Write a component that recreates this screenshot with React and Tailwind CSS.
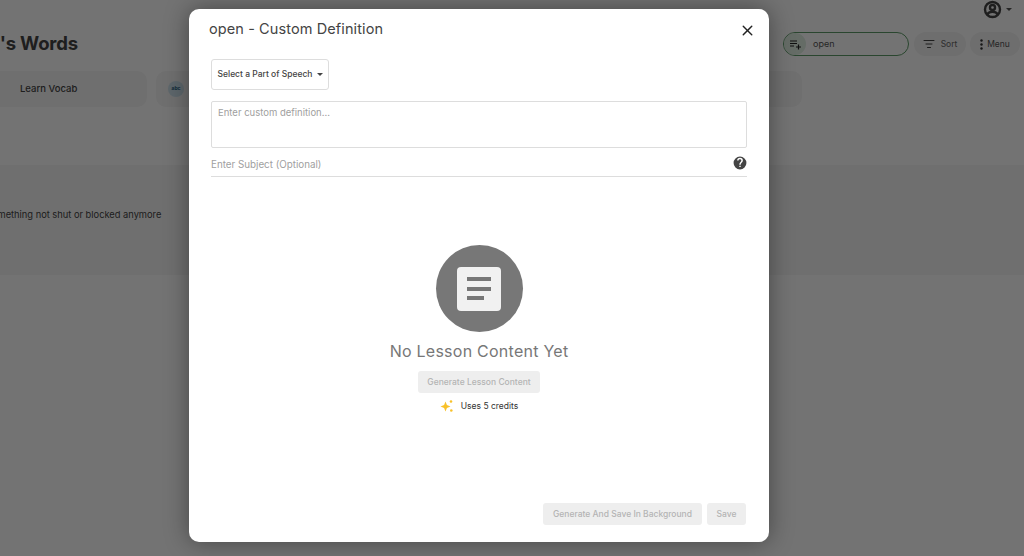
import React from "react";
import { X, ListFilter } from "lucide-react";

const font = { fontFamily: '"Inter", "Noto Sans", sans-serif' };

function Background() {
  return (
    <div className="h-[556px] w-[1024px] overflow-hidden bg-white text-[#444]">
      <div className="flex h-[32px] justify-end pr-[12px]">
        <div className="flex items-start gap-[4px]">
          <svg width="19" height="19" viewBox="0 0 24 24" fill="none" stroke="#444" strokeWidth="3">
            <circle cx="12" cy="12" r="9.5" />
            <circle cx="12" cy="9.5" r="3.2" />
            <path d="M5.500 18.500c1-2.600 4-3.700 6.500-3.700s5.500 1.100 6.500 3.700" />
          </svg>
          <span className="mt-[8px] h-0 w-0 border-x-[3px] border-t-[3px] border-x-transparent border-t-[#555]" />
        </div>
      </div>
      <div className="flex h-[39px] items-start pr-[4px]">
        <div className="ml-[-5px] mt-[-1px] flex-1 text-[18.500px] font-bold leading-[24px] tracking-[-0.2px]">l's Words</div>
        <div className="flex h-[24px] w-[126px] items-center rounded-full border border-[#5d9c68]">
          <span className="flex h-[22px] w-[22px] items-center justify-center rounded-full bg-[#e0efe2]">
            <svg width="13" height="13" viewBox="0 0 13 13" fill="none" stroke="#222" strokeWidth="1.200">
              <path d="M1 3h7M1 5.500h7M1 8h4M9.500 6.500v5M7 9h5" />
            </svg>
          </span>
          <span className="ml-[7px] text-[9px] text-[#555]">open</span>
        </div>
        <div className="ml-[5px] flex h-[24px] w-[52px] items-center justify-center gap-[6px] rounded-full bg-[#f3f3f3] text-[8.5px] text-[#666]">
          <ListFilter size={12} color="#444" />
          Sort
        </div>
        <div className="ml-[4px] flex h-[24px] w-[50px] items-center justify-center gap-[4px] rounded-full bg-[#f3f3f3] text-[8.5px] text-[#555]">
          <svg width="3" height="11" viewBox="0 0 3 11" fill="#333">
            <circle cx="1.500" cy="1.500" r="1.200" />
            <circle cx="1.500" cy="5.500" r="1.200" />
            <circle cx="1.500" cy="9.500" r="1.200" />
          </svg>
          Menu
        </div>
      </div>
      <div className="flex h-[36px] gap-[9px]">
        <div className="flex w-[147px] items-center rounded-r-[10px] bg-[#f5f5f5] pl-[20px] text-[9.500px] font-medium">Learn Vocab</div>
        <div className="flex w-[646px] items-center rounded-[10px] bg-[#f5f5f5] pl-[12px]">
          <span className="flex h-[16px] w-[16px] items-center justify-center rounded-full bg-[#cfe3ee] text-[5px] font-bold text-[#1d5a80]">abc</span>
        </div>
      </div>
      <div className="mt-[58px] flex h-[110px] items-center bg-[#f7f7f7] pb-[11px]">
        <div className="ml-[-13px] text-[9.300px] leading-none">something not shut or blocked anymore</div>
      </div>
    </div>
  );
}

function Disabled({ className, children }) {
  return (
    <div className={`flex items-center justify-center rounded-[3px] bg-[#eeeeee] text-[8.5px] font-medium text-[#b4b4b4] ${className}`}>
      {children}
    </div>
  );
}

function Modal() {
  return (
    <div className="ml-[189px] mt-[9px] flex h-[533px] w-[580px] flex-col rounded-[10px] bg-white pl-[22px] pr-[22px] shadow-[0_0_24px_rgba(0,0,0,0.4)]">
      <div className="ml-[-2px] mr-[-9px] flex h-[50px] items-start justify-between pt-[10px]">
        <span className="text-[14.500px] leading-[20px] tracking-[0.1px] text-[#444]">open - Custom Definition</span>
        <X size={17} color="#222" strokeWidth={2} className="mt-[3px]" />
      </div>
      <div className="flex h-[31px] w-[118px] items-center justify-center gap-[3px] rounded-[3px] border border-[#dddddd] text-[8.5px] font-medium text-[#444]">
        Select a Part of Speech
        <span className="ml-[1px] h-0 w-0 border-x-[3px] border-t-[3px] border-x-transparent border-t-[#444]" />
      </div>
      <div className="mt-[11px] h-[47px] rounded-[2px] border border-[#dddddd] px-[6px] py-[3px] text-[9.5px] leading-[15px] text-[#a0a0a0]">
        Enter custom definition...
      </div>
      <div className="flex h-[29px] items-center justify-between border-b border-[#dddddd] pt-[6px] text-[9.800px] text-[#a0a0a0]">
        <span>Enter Subject (Optional)</span>
        <svg width="14" height="14" viewBox="0 0 24 24" className="mt-[-4px]" fill="#444">
          <path d="M12 1a11 11 0 1 0 0 22 11 11 0 0 0 0-22zm1.200 18h-2.400v-2.400h2.400V19zm2.400-8.200-1.100 1.100c-.9.9-1.300 1.600-1.300 3.100h-2.400v-.6c0-1.300.5-2.500 1.300-3.400l1.500-1.500c.4-.4.7-1 .7-1.700a2.400 2.400 0 0 0-4.800 0H7.100a4.900 4.900 0 0 1 9.800 0c0 1.100-.5 2.100-1.300 3z" />
        </svg>
      </div>
      <div className="mt-[68px] flex flex-col items-center">
        <div className="flex h-[87px] w-[87px] items-center justify-center rounded-full bg-[#777777]">
          <div className="flex h-[44px] w-[44px] flex-col justify-center gap-[5.500px] rounded-[4px] bg-[#f1f1f1] pl-[10px]">
            <span className="h-[4px] w-[24px] bg-[#777777]" />
            <span className="h-[4px] w-[24px] bg-[#777777]" />
            <span className="h-[4px] w-[17px] bg-[#777777]" />
          </div>
        </div>
        <div className="mt-[9px] text-[16px] leading-[20px] tracking-[0.25px] text-[#777777]">No Lesson Content Yet</div>
        <Disabled className="mt-[10px] h-[22px] w-[122px]">Generate Lesson Content</Disabled>
        <div className="mt-[6px] flex items-center gap-[7px] text-[8.5px] leading-[14px] text-[#333]">
          <svg width="14" height="14" viewBox="0 0 14 14" fill="#f8c12a">
            <path d="M5.500 2.500 6.900 6.100 10.500 7.500 6.900 8.900 5.500 12.500 4.100 8.900 .5 7.500 4.100 6.100Z" />
            <circle cx="11" cy="2.500" r="1.300" />
            <circle cx="11.300" cy="11.500" r="1.300" />
          </svg>
          Uses 5 credits
        </div>
      </div>
      <div className="mt-auto mb-[17px] flex justify-end gap-[5px] pr-[1px]">
        <Disabled className="h-[22px] w-[159px]">Generate And Save In Background</Disabled>
        <Disabled className="h-[22px] w-[39px]">Save</Disabled>
      </div>
    </div>
  );
}

export default function App() {
  return (
    <div className="relative h-[556px] w-[1024px] overflow-hidden" style={font}>
      <Background />
      <div className="absolute inset-0 bg-black/[0.55]">
        <Modal />
      </div>
    </div>
  );
}
